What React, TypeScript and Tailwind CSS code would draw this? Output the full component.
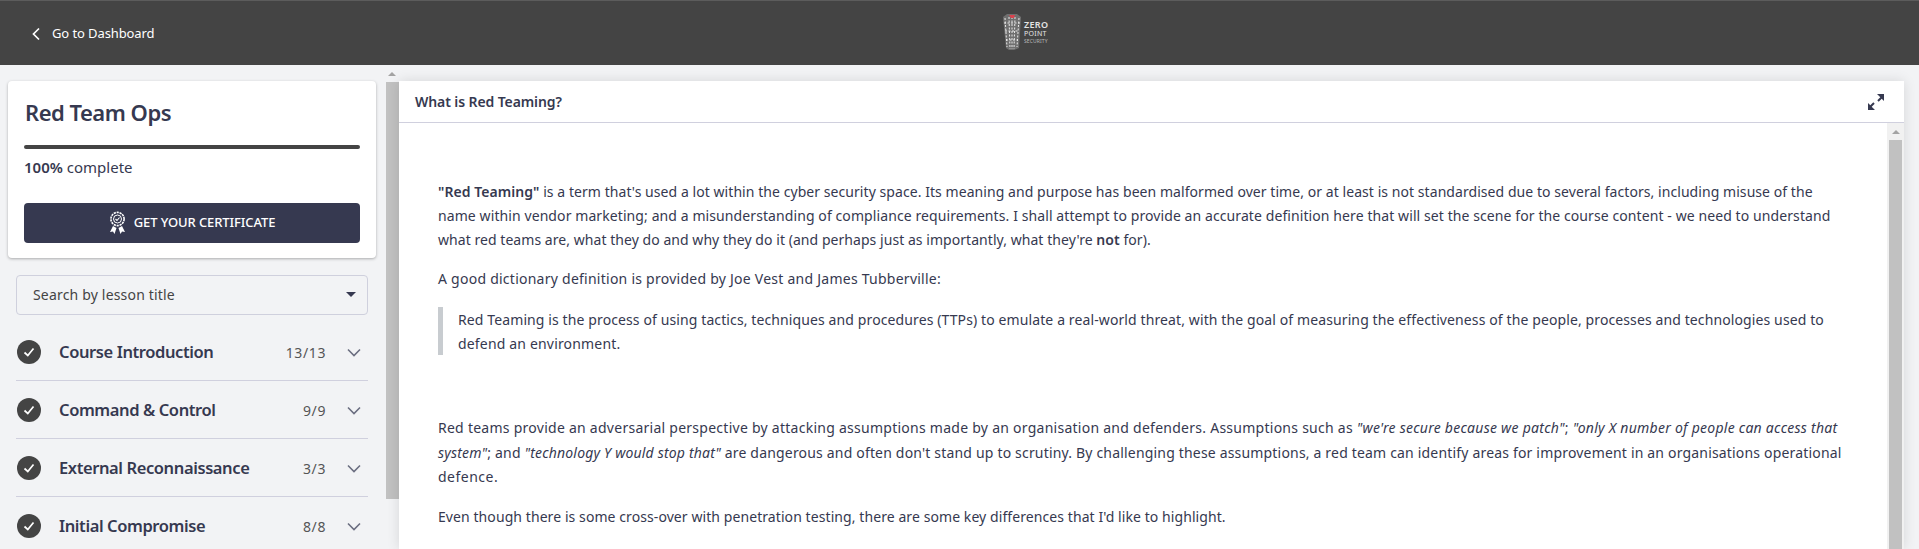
import React from "react";

const Chevron = () => (
  <svg width="14" height="14" viewBox="0 0 14 14" fill="none" stroke="#6b6e80" strokeWidth="1.6"><path d="M1 4.5 7 10.5 13 4.5" /></svg>
);

const Check = () => (
  <span className="flex items-center justify-center w-6 h-6 rounded-full bg-[#444444] shrink-0">
    <svg width="14" height="14" viewBox="0 0 14 14" fill="none" stroke="#fff" strokeWidth="1.7"><path d="M2.5 7.5 5.8 10.5 11.5 3.5" /></svg>
  </span>
);

const Row = ({ title, count, last }: { title: string; count: string; last?: boolean }) => (
  <div className={`flex items-center h-[58px] ${last ? "" : "border-b border-[#d0d0de]"}`}>
    <span className="ml-px"><Check /></span>
    <span className="ml-[18px] pt-px text-[16.5px] font-semibold text-[#363950] tracking-[-0.4px]">{title}</span>
    <span className="ml-auto pt-px text-[14px] text-[#555] tracking-[0.6px]">{count}</span>
    <span className="ml-[21px] mr-[7px] flex"><Chevron /></span>
  </div>
);

const Scrollbar = ({ className, thumb }: { className: string; thumb: string }) => (
  <div className={`flex flex-col items-center shrink-0 ${className}`}>
    <div className="h-[17px] flex items-center justify-center shrink-0">
      <div className="w-0 h-0 border-x-[4px] border-x-transparent border-b-[4px] border-b-[#a3a3a3]" />
    </div>
    <div className={`w-[13px] bg-[#c1c1c1] ${thumb}`} />
  </div>
);

export default function App() {
  return (
    <div className="h-[549px] w-[1919px] overflow-hidden flex flex-col bg-[#f2f3f5] text-[#363950]" style={{ fontFamily: "'Noto Sans', sans-serif" }}>
      <header className="h-[65px] shrink-0 bg-[#444444] border-t border-[#5c5c5c] flex items-center relative">
        <div className="flex items-center ml-[31px] mt-px text-white text-[13px] tracking-[-0.1px]">
          <svg width="10" height="14" viewBox="0 0 10 14" fill="none" stroke="#fff" strokeWidth="1.7"><path d="M8 1.5 2.5 7 8 12.5" /></svg>
          <span className="ml-[11px]">Go to Dashboard</span>
        </div>
        <div className="absolute left-[1002px] top-[12px] flex items-center gap-[2px]">
          <svg width="20" height="38" viewBox="0 0 20 38" fill="none">
            <path d="M1 4 5 1h10l4 3-2 31-5 2H7l-3-2Z" fill="#6f6f6f" />
            <path d="M3 5 5 34M7 4l1 32M10 4v32M13 4l-1 32M17 5l-2 29M2 10h16M3 18h14M4 27h12" stroke="#e8e8e8" strokeWidth="1" strokeDasharray="2 1.5" />
            <path d="M7 2h6l-1 3H9Z" fill="#d9434e" />
          </svg>
          <div className="flex flex-col text-[#e4e4e4] leading-none">
            <span className="text-[9px] font-semibold tracking-[0.3px]">ZERO</span>
            <span className="text-[7px] mt-[1px] tracking-[0.3px]">POINT</span>
            <span className="text-[5px] mt-[2px] tracking-[0.1px] text-[#bbb]">SECURITY</span>
          </div>
        </div>
      </header>

      <div className="flex flex-1 min-h-0">
        <aside className="w-[368px] shrink-0 ml-2 pt-4">
          <section className="h-[177px] bg-white rounded shadow-[0_1px_3px_rgba(0,0,0,0.3)] px-4 pt-[15px]">
            <h1 className="text-[22px] leading-[32px] font-semibold tracking-[-0.5px] ml-px">Red Team Ops</h1>
            <div className="h-1 mt-[17px] rounded-full bg-[#444444]" />
            <p className="mt-[6px] text-[15px] leading-[24px]"><b className="font-semibold">100%</b> complete</p>
            <button className="mt-[24px] w-full h-10 rounded bg-[#363950] flex items-center justify-center gap-2 text-white text-[13px] font-medium tracking-[-0.1px]">
              <svg width="17" height="24" viewBox="0 0 17 24" fill="none">
                <circle cx="8.5" cy="8" r="6.6" stroke="#fff" strokeWidth="1.6" strokeDasharray="2.2 0.8" />
                <circle cx="8.5" cy="8" r="4" stroke="#fff" strokeWidth="1" />
                <path d="M6.5 8 8 9.5 10.5 6.5" stroke="#fff" strokeWidth="1.1" />
                <path d="M4 15 1 21l3-.5 1.5 2.5L7.5 17ZM13 15l3 6-3-.5-1.5 2.5L9.5 17Z" fill="#fff" />
              </svg>
              GET YOUR CERTIFICATE
            </button>
          </section>
          <div className="mx-2">
            <div className="mt-[17px] h-10 rounded border border-[#cfd0dd] flex items-center pl-4 pr-[11px] pb-px text-[14px] tracking-[0.18px] text-[#444]">
              Search by lesson title
              <span className="ml-auto w-0 h-0 border-x-[5px] border-x-transparent border-t-[5px] border-t-[#363950]" />
            </div>
            <div className="mt-2">
              <Row title="Course Introduction" count="13/13" />
              <Row title="Command & Control" count="9/9" />
              <Row title="External Reconnaissance" count="3/3" />
              <Row title="Initial Compromise" count="8/8" last />
            </div>
          </div>
        </aside>

        <Scrollbar className="ml-[9px] w-[14px]" thumb="h-[417px]" />

        <main className="w-[1505px] mt-4 bg-white shadow-[0_0_12px_rgba(0,0,0,0.12)] flex flex-col min-h-0">
          <div className="h-[42px] shrink-0 border-b border-[#d0d0de] flex items-center justify-between pl-[16px] pr-5">
            <h2 className="text-[14px] font-semibold tracking-[-0.1px]">What is Red Teaming?</h2>
            <svg width="16" height="16" viewBox="0 0 16 16" fill="#363950">
              <path d="M9 0h7v7l-2.3-2.3-3 3-1.4-1.4 3-3ZM7 16H0V9l2.3 2.3 3-3 1.4 1.4-3 3Z" />
            </svg>
          </div>
          <div className="flex flex-1 min-h-0">
            <article className="flex-1 pl-[39px] pt-[57px] text-[14px] leading-[24px] text-[#363950] whitespace-nowrap overflow-hidden">
              <p>
                <span className="block tracking-[0.06px]"><b className="font-semibold">"Red Teaming"</b> is a term that's used a lot within the cyber security space. Its meaning and purpose has been malformed over time, or at least is not standardised due to several factors, including misuse of the</span>
                <span className="block tracking-[0.09px]">name within vendor marketing; and a misunderstanding of compliance requirements. I shall attempt to provide an accurate definition here that will set the scene for the course content - we need to understand</span>
                <span className="block tracking-[0.05px]">what red teams are, what they do and why they do it (and perhaps just as importantly, what they're <b className="font-semibold">not</b> for).</span>
              </p>
              <p className="mt-[15px] tracking-[0.25px]">A good dictionary definition is provided by Joe Vest and James Tubberville:</p>
              <blockquote className="mt-4 h-12 border-l-[5px] border-[#c8ccd0] pl-[15px]">
                <span className="block pt-px tracking-[0.11px]">Red Teaming is the process of using tactics, techniques and procedures (TTPs) to emulate a real-world threat, with the goal of measuring the effectiveness of the people, processes and technologies used to</span>
                <span className="block tracking-[0.17px]">defend an environment.</span>
              </blockquote>
              <p className="mt-[61px] leading-[24.6px]">
                <span className="block tracking-[0.26px]">Red teams provide an adversarial perspective by attacking assumptions made by an organisation and defenders. Assumptions such as <i>"we're secure because we patch"</i>; <i>"only X number of people can access that</i></span>
                <span className="block tracking-[0.18px]"><i>system"</i>; and <i>"technology Y would stop that"</i> are dangerous and often don't stand up to scrutiny. By challenging these assumptions, a red team can identify areas for improvement in an organisations operational</span>
                <span className="block tracking-[0.5px]">defence.</span>
              </p>
              <p className="mt-[15px] tracking-[0.08px]">Even though there is some cross-over with penetration testing, there are some key differences that I'd like to highlight.</p>
            </article>
            <Scrollbar className="w-[17px] bg-[#f1f1f1]" thumb="flex-1" />
          </div>
        </main>
      </div>
    </div>
  );
}
